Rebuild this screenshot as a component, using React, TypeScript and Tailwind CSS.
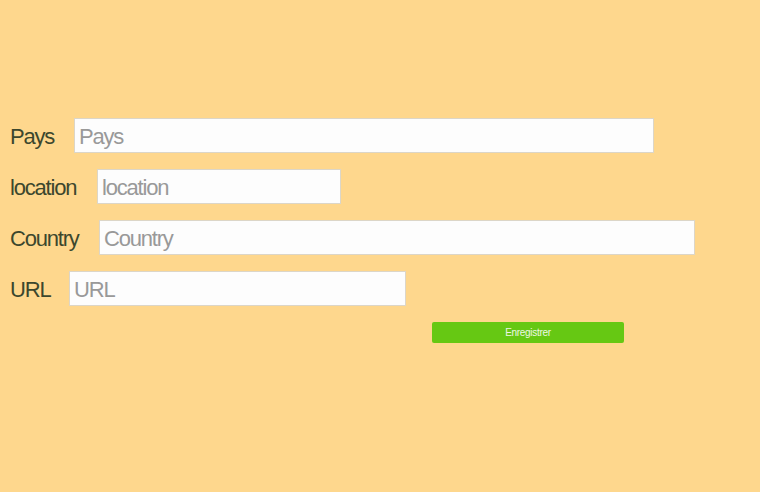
const rows = [
  { label: "Pays", labelWidth: "w-[64px]", width: "w-[580px]" },
  { label: "location", labelWidth: "w-[87px]", width: "w-[244px]" },
  { label: "Country", labelWidth: "w-[89px]", width: "w-[596px]" },
  { label: "URL", labelWidth: "w-[59px]", width: "w-[337px]" },
];

export default function App() {
  return (
    <div className="min-h-[492px] w-full bg-[#fed78d] px-[10px] pt-[118px] font-['Liberation_Sans',Arial,sans-serif]">
      <form className="flex flex-col gap-[16px]" onSubmit={(e) => e.preventDefault()}>
        {rows.map((row) => (
          <div key={row.label} className="flex h-[35px] items-center">
            <label className={`${row.labelWidth} shrink-0 pt-[2px] text-[22px] leading-none tracking-[-1.2px] text-[#3c472d]`}>
              {row.label}
            </label>
            <input
              type="text"
              placeholder={row.label}
              className={`${row.width} h-[35px] border border-[#dcd6c8] bg-[#fdfdfd] px-[4px] pt-[2px] text-[22px] tracking-[-1.2px] text-[#555] placeholder:text-[#999] outline-none`}
            />
          </div>
        ))}
        <div className="flex pl-[422px]">
          <button
            type="submit"
            className="h-[21px] w-[192px] rounded-[2px] bg-[#66c813] text-[10px] tracking-[-0.3px] text-[#eef7e4]"
          >
            Enregistrer
          </button>
        </div>
      </form>
    </div>
  );
}
